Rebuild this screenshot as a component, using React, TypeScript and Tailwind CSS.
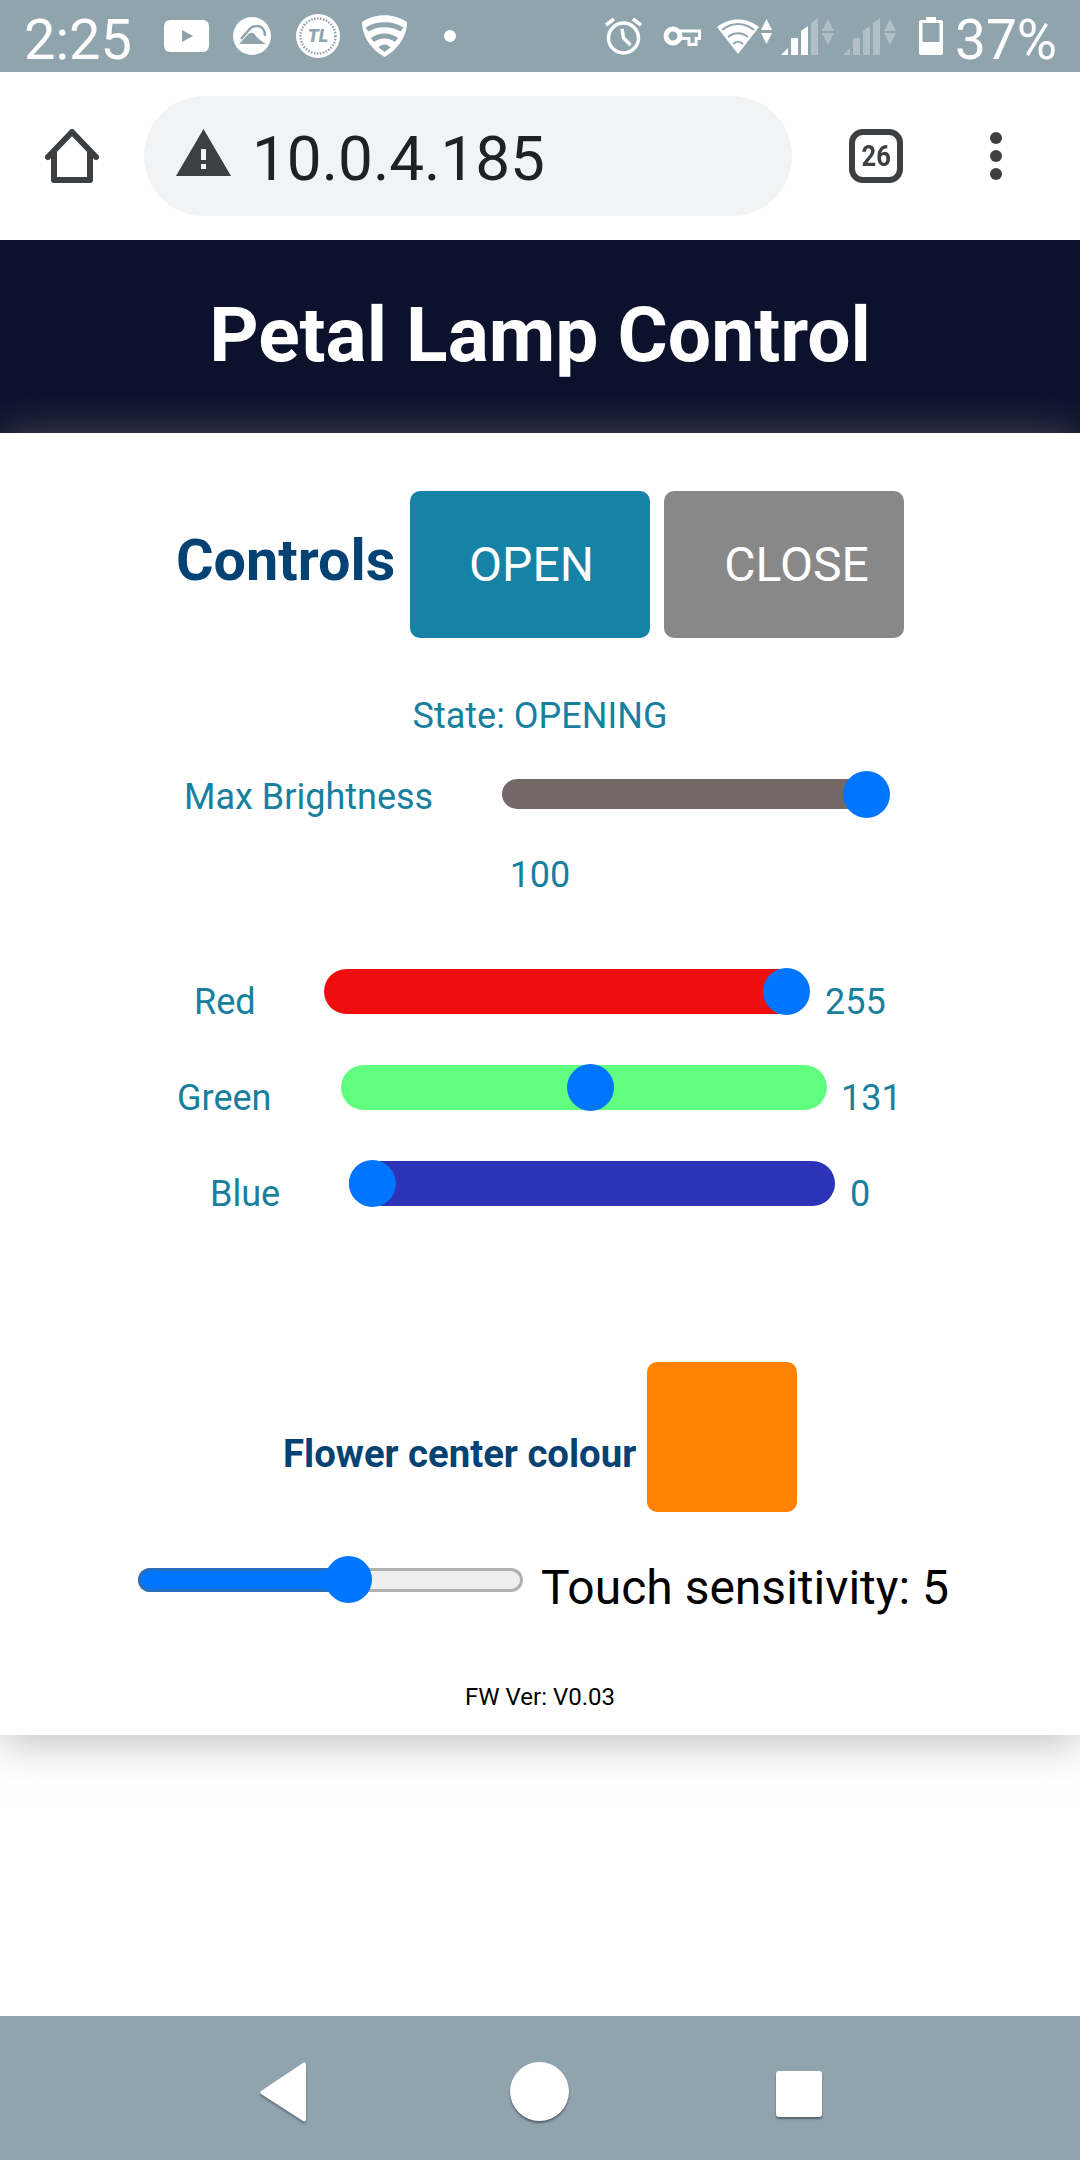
const tealText = 'text-[#187f9f]';

function StatusIcons() {
  return (
    <>
      {/* youtube */}
      <svg className="ml-[33px] w-[45px] h-[32px]" viewBox="0 0 45 32">
        <rect width="45" height="32" rx="6" fill="#fff" />
        <path d="M18 10 29 16 18 22Z" fill="#90a4ae" />
      </svg>
      {/* cloud in circle */}
      <svg className="ml-[24px] w-[38px] h-[38px]" viewBox="0 0 38 38">
        <circle cx="19" cy="19" r="19" fill="#fff" />
        <path d="M8 22 15 14C18 10 21 9 24 9 29 9 32 13 32 19" fill="none" stroke="#90a4ae" strokeWidth="2.500" />
        <path d="M6 27 15 17.500C17 15.500 19 15 21 16.500 24 21 28 24 33 27Z" fill="#90a4ae" />
      </svg>
      {/* TL badge */}
      <svg className="ml-[24px] w-[46px] h-[44px]" viewBox="0 0 46 44">
        <circle cx="23" cy="22" r="22" fill="#fff" />
        <circle cx="23" cy="22" r="17.500" fill="none" stroke="#90a4ae" strokeWidth="2.500" strokeDasharray="1.500 1.500" />
        <text x="23" y="28" textAnchor="middle" fontFamily="Roboto, sans-serif" fontWeight="900" fontStyle="italic" fontSize="18" fill="#90a4ae">TL</text>
      </svg>
      {/* shield */}
      <svg className="ml-[21px] w-[45px] h-[42px]" viewBox="0 0 45 42">
        <path d="M0 7C13-2 32-2 45 7 45 22 35 35 22.500 42 10 35 0 22 0 7Z" fill="#fff" />
        <path d="M5 14.500C15 8 30 8 40 14.500M10.500 25C17 19.500 28 19.500 34.500 25" fill="none" stroke="#90a4ae" strokeWidth="5" />
        <path d="M16.500 32.500C20 28.500 25 28.500 28.500 32.500L22.500 37Z" fill="#90a4ae" />
      </svg>
      <span className="ml-[37px] w-[12px] h-[12px] rounded-full bg-white" />
    </>
  );
}

function SignalIcon({ dim }: { dim?: boolean }) {
  const lit = dim ? '#b1c0c7' : '#fff';
  return (
    <svg className="w-[53px] h-[37px]" viewBox="0 0 53 37">
      <path d="M0 37 7 30V37Z" fill={lit} />
      <rect x="10" y="20" width="7" height="17" fill={lit} />
      <path d="M20 13 27 8V37H20Z" fill={lit} />
      <path d="M30 5 37 0V37H30Z" fill="#b1c0c7" />
      <path d="M47 1 53 13H41Z" fill="#b1c0c7" />
      <path d="M47 27 53 15H41Z" fill="#b1c0c7" />
    </svg>
  );
}

function StatusBar() {
  return (
    <div className="h-[72px] bg-[#90a4ae] flex items-center pl-[24px] text-white">
      <span className="text-[56px] leading-[72px] w-[107px] pt-[7px]">2:25</span>
      <StatusIcons />
      <div className="flex-1" />
      {/* alarm */}
      <svg className="w-[37px] h-[38px]" viewBox="0 0 37 38" fill="none" stroke="#fff" strokeWidth="3.500">
        <circle cx="18.500" cy="21" r="15" />
        <path d="M17 12 18.500 21 25.500 28M1 8 9 2M36 8 28 2" />
      </svg>
      {/* vpn key */}
      <svg className="ml-[21px] w-[38px] h-[20px]" viewBox="0 0 38 20" fill="none" stroke="#fff" strokeWidth="3">
        <circle cx="10" cy="10" r="7" strokeWidth="5" />
        <path d="M17 5H36.500V12.500H33V18.500H26V12.500H17.500" />
      </svg>
      {/* wifi */}
      <svg className="ml-[16px] w-[55px] h-[35px]" viewBox="0 0 55 35">
        <path d="M0 8C12-2 30-2 42 8L21 35Z" fill="#fff" />
        <path d="M5 11C15 3 27 3 37 11M11 18C17 13 25 13 31 18M16 25C19 22 23 22 26 25" fill="none" stroke="#90a4ae" strokeWidth="2" />
        <path d="M49.500 0 55 11H44Z" fill="#fff" />
        <path d="M49.500 25 55 14H44Z" fill="#fff" />
      </svg>
      <div className="ml-[9px]"><SignalIcon /></div>
      <div className="ml-[9px]"><SignalIcon dim /></div>
      {/* battery */}
      <svg className="ml-[23px] w-[24px] h-[38px]" viewBox="0 0 24 38">
        <path d="M7 0H17V3H22C23 3 24 4 24 5V36C24 37 23 38 22 38H2C1 38 0 37 0 36V5C0 4 1 3 2 3H7Z" fill="#fff" />
        <rect x="3.500" y="6" width="17" height="19" fill="#90a4ae" />
      </svg>
      <span className="ml-[12px] w-[125px] text-[55px] leading-[72px] pt-[7px]">37%</span>
    </div>
  );
}

function UrlBar() {
  return (
    <div className="h-[168px] bg-white flex items-center">
      {/* home */}
      <svg className="ml-[45px] w-[54px] h-[54px]" viewBox="0 0 54 54" fill="none" stroke="#3c4043" strokeWidth="6" strokeLinejoin="round" strokeLinecap="round">
        <path d="M3 28 27 3 51 28M9 23V51H45V23" />
      </svg>
      <div className="ml-[45px] w-[648px] h-[120px] rounded-full bg-[#f1f3f4] flex items-center">
        <svg className="ml-[32px] mb-[7px] w-[55px] h-[47px]" viewBox="0 0 55 47">
          <path d="M27.500 0 55 47H0Z" fill="#3c4043" />
          <path d="M25 20H30V31H25ZM25 35H30V40H25Z" fill="#f1f3f4" />
        </svg>
        <span className="ml-[21px] pt-[6px] text-[62px] leading-none text-[#202124]">10.0.4.185</span>
      </div>
      {/* tab count */}
      <div className="ml-[57px] w-[54px] h-[54px] rounded-[14px] border-[6px] border-[#3c4043] flex items-center justify-center text-[#3c4043]">
        <span className="text-[30px] leading-none font-bold scale-x-85">26</span>
      </div>
      <div className="ml-[87px] flex flex-col gap-[6px]">
        <span className="w-[12px] h-[12px] rounded-full bg-[#3c4043]" />
        <span className="w-[12px] h-[12px] rounded-full bg-[#3c4043]" />
        <span className="w-[12px] h-[12px] rounded-full bg-[#3c4043]" />
      </div>
    </div>
  );
}

function Track({ width, height, value, max, className }: { width: string; height: string; value: number; max: number; className: string }) {
  const w = parseInt(width);
  return (
    <div className={`relative shrink-0 ${className}`}>
      <span
        className="absolute w-[47px] h-[47px] rounded-full bg-[#0075ff]"
        style={{ left: (value / max) * (w - 46), top: (parseInt(height) - 47) / 2 }}
      />
    </div>
  );
}

function ColorRow({ label, labelClass, value, valueClass, trackClass, trackW, num, mt }: {
  label: string; labelClass: string; value: number; valueClass: string; trackClass: string; trackW: string; num: string; mt: string;
}) {
  return (
    <div className={`flex items-start h-[46px] ${mt} ${tealText} text-[36px] leading-[46px]`}>
      <span className={`shrink-0 pt-[10px] ${labelClass}`}>{label}</span>
      <Track width={trackW} height="45" value={value} max={255} className={trackClass} />
      <span className={`pt-[10px] ${valueClass}`}>{num}</span>
    </div>
  );
}

export default function App() {
  return (
    <div className="w-[1080px] h-[2160px] bg-white flex flex-col overflow-hidden font-['Roboto',sans-serif]">
      <StatusBar />
      <UrlBar />
      <header className="h-[193px] bg-[#0c122c] flex items-start justify-center text-white font-bold text-[76.800px] leading-[84px] pt-[53px]">
        Petal Lamp Control
      </header>

      <main className="relative h-[1302px] bg-white shadow-[0_4px_44px_rgba(128,128,128,0.58)]">
        <div className="flex pt-[58px] pl-[176px]">
          <h2 className="w-[234px] h-[147px] pt-[37px] text-[57.500px] leading-[66px] font-bold text-[#044274]">Controls</h2>
          <button className="w-[240px] h-[147px] rounded-[10px] bg-[#1682a5] text-white text-[48px] pl-[3px]">OPEN</button>
          <button className="ml-[14px] w-[240px] h-[147px] rounded-[10px] bg-[#888888] text-white text-[48px] pl-[25px]">CLOSE</button>
        </div>

        <p className={`mt-[57px] text-center text-[36px] leading-[42px] ${tealText}`}>State: OPENING</p>

        <div className={`mt-[33px] flex items-start pl-[184px] h-[47px] ${tealText} text-[36px] leading-[46px]`}>
          <span className="w-[318px] pt-[4px]">Max Brightness</span>
          <Track width="387" height="30" value={100} max={100} className="mt-[9px] w-[387px] h-[30px] rounded-[15px] bg-[#736767]" />
        </div>

        <p className={`mt-[35px] text-center text-[36px] leading-[46px] ${tealText}`}>100</p>

        <div className="mt-[71px]">
          <ColorRow label="Red" labelClass="pl-[194px] w-[324px]" value={255} valueClass="ml-[16px]" trackClass="w-[485px] h-[45px] rounded-[23px] bg-[#ee0e0e]" trackW="485" num="255" mt="mt-0" />
          <ColorRow label="Green" labelClass="pl-[177px] w-[341px]" value={131} valueClass="ml-[14px]" trackClass="w-[486px] h-[45px] rounded-[23px] bg-[#60ff80]" trackW="486" num="131" mt="mt-[50px]" />
          <ColorRow label="Blue" labelClass="pl-[210px] w-[349px]" value={0} valueClass="ml-[15px]" trackClass="w-[486px] h-[45px] rounded-[23px] bg-[#2c33b4]" trackW="486" num="0" mt="mt-[50px]" />
        </div>

        <div className="mt-[155px] flex items-start pl-[283px]">
          <span className="w-[364px] pt-[69px] text-[38.300px] leading-[46px] font-bold text-[#044274]">Flower center colour</span>
          <div className="w-[150px] h-[150px] rounded-[10px] bg-[#ff8200]" />
        </div>

        <div className="mt-[44px] flex items-start pl-[138px]">
          <div className="relative mt-[12px] w-[385px] h-[24px] rounded-[12px] border-[3px] border-[#b0b0b0] bg-[#efefef]">
            <div className="absolute -left-[3px] -top-[3px] w-[200px] h-[24px] rounded-l-[12px] bg-[#0075ff] border-[3px] border-r-0 border-[#2a6fbd]" />
            <span className="absolute left-[184px] -top-[15px] w-[47px] h-[47px] rounded-full bg-[#0075ff]" />
          </div>
          <span className="ml-[18px] pt-[5px] text-[48px] leading-[54px] text-black">Touch sensitivity: 5</span>
        </div>

        <p className="mt-[67px] text-center text-[24px] leading-[30px] text-black">FW Ver: V0.03</p>
      </main>

      <div className="flex-1 bg-white" />

      <nav className="h-[144px] bg-[#90a4ae] flex items-center pt-[7px]">
        <svg className="ml-[257px] w-[52px] h-[64px] drop-shadow-[0_2px_1px_rgba(60,70,80,0.6)]" viewBox="0 0 52 64">
          <path d="M4 31 46 3C48 2 49 3 49 5V59C49 61 48 62 46 61L4 34C3 33 3 32 4 31Z" fill="#fff" />
        </svg>
        <span className="ml-[201px] w-[59px] h-[59px] rounded-full bg-white shadow-[0_2px_2px_rgba(60,70,80,0.7)]" />
        <span className="ml-[207px] mt-[4px] w-[46px] h-[46px] rounded-[3px] bg-white shadow-[0_2px_2px_rgba(60,70,80,0.7)]" />
      </nav>
    </div>
  );
}
